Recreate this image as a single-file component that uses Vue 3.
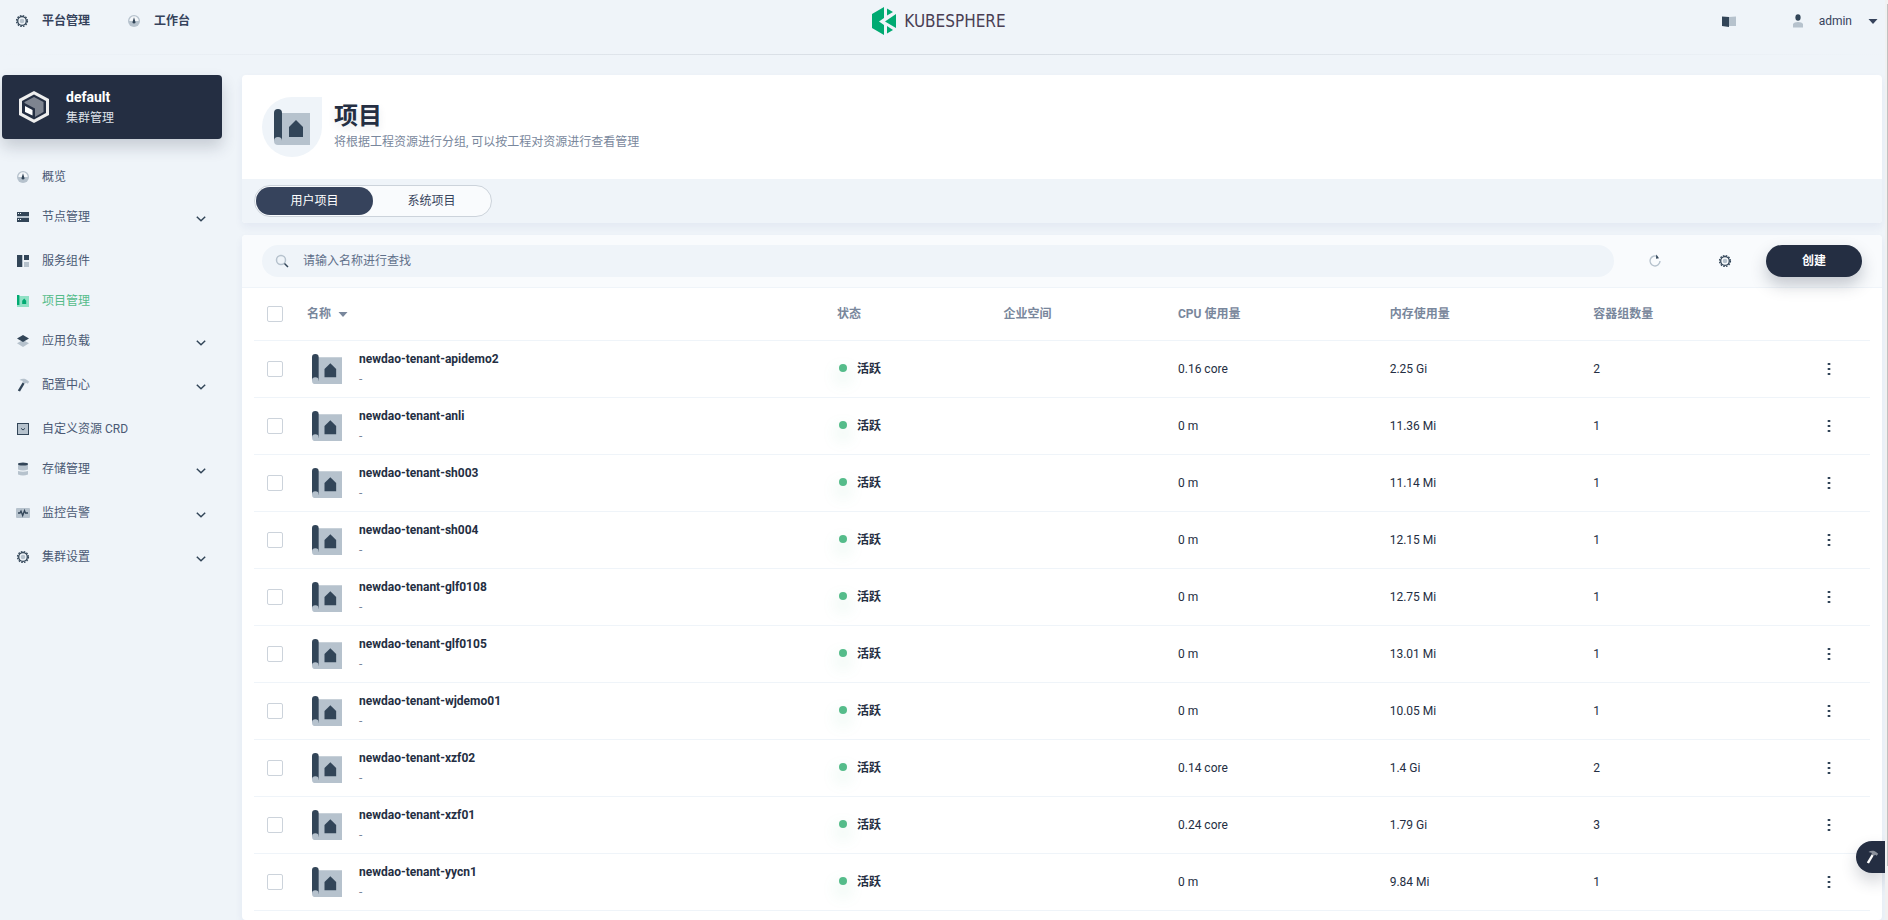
<script setup>
import { ref } from 'vue';

const keyword = ref('');
const activeTab = ref('user');
const selected = ref([]);

const tabs = [
  { key: 'user', label: '用户项目' },
  { key: 'system', label: '系统项目' },
];

const menus = [
  { icon: 'dashboard', label: '概览' },
  { icon: 'nodes', label: '节点管理', children: true },
  { icon: 'components', label: '服务组件' },
  { icon: 'project', label: '项目管理', active: true },
  { icon: 'workload', label: '应用负载', children: true },
  { icon: 'hammer', label: '配置中心', children: true },
  { icon: 'crd', label: '自定义资源 CRD' },
  { icon: 'storage', label: '存储管理', children: true },
  { icon: 'monitor', label: '监控告警', children: true },
  { icon: 'gear', label: '集群设置', children: true },
];

const projects = [
  { name: 'newdao-tenant-apidemo2', cpu: '0.16 core', memory: '2.25 Gi', pods: 2 },
  { name: 'newdao-tenant-anli', cpu: '0 m', memory: '11.36 Mi', pods: 1 },
  { name: 'newdao-tenant-sh003', cpu: '0 m', memory: '11.14 Mi', pods: 1 },
  { name: 'newdao-tenant-sh004', cpu: '0 m', memory: '12.15 Mi', pods: 1 },
  { name: 'newdao-tenant-glf0108', cpu: '0 m', memory: '12.75 Mi', pods: 1 },
  { name: 'newdao-tenant-glf0105', cpu: '0 m', memory: '13.01 Mi', pods: 1 },
  { name: 'newdao-tenant-wjdemo01', cpu: '0 m', memory: '10.05 Mi', pods: 1 },
  { name: 'newdao-tenant-xzf02', cpu: '0.14 core', memory: '1.4 Gi', pods: 2 },
  { name: 'newdao-tenant-xzf01', cpu: '0.24 core', memory: '1.79 Gi', pods: 3 },
  { name: 'newdao-tenant-yycn1', cpu: '0 m', memory: '9.84 Mi', pods: 1 },
];

function toggleAll(e) {
  selected.value = e.target.checked ? projects.map((p) => p.name) : [];
}
</script>

<template>
  <div class="page">
    <!-- 图标 -->
    <svg class="sprite" aria-hidden="true">
      <symbol id="gear" viewBox="0 0 14 14">
        <circle cx="7" cy="7" r="5.4" fill="none" stroke="#324558" stroke-width="1.4" stroke-dasharray="1.6 1.23" />
        <circle cx="7" cy="7" r="4.3" fill="none" stroke="#324558" stroke-width="1.3" />
        <circle cx="7" cy="7" r="2.3" fill="#b6c2cd" />
      </symbol>
      <symbol id="dashboard" viewBox="0 0 14 14">
        <circle cx="7" cy="7" r="6" fill="#b6c2cd" />
        <path d="M2.3 7a4.7 4.7 0 0 1 9.4 0z" fill="#f4f7fa" />
        <path d="M7 3.2l1.3 4.4a1.4 1.4 0 1 1-2.6 0z" fill="#324558" />
      </symbol>
      <symbol id="nodes" viewBox="0 0 14 14">
        <path d="M1 5h12v4H1z" fill="#b6c2cd" />
        <path d="M1 2h12v4H1zM1 8h12v4H1z" fill="#324558" />
        <path d="M2 3h1v1H2zM4 3h1v1H4zM2 9h1v1H2zM4 9h1v1H4z" fill="#eff4f9" />
      </symbol>
      <symbol id="components" viewBox="0 0 14 14">
        <path d="M1 1h5v12H1zM8 1h5v5H8z" fill="#324558" />
        <path d="M6 1h1v12H6zM8 8h5v5H8z" fill="#b6c2cd" />
      </symbol>
      <symbol id="project" viewBox="0 0 14 14">
        <path d="M3 2h10v11H1v-2h2z" fill="#90e0c5" />
        <path d="M1 1h2.4v10H1zM8.2 4.5l2 2.2V10h-4V6.700z" fill="#00aa72" />
      </symbol>
      <symbol id="workload" viewBox="0 0 14 14">
        <path d="M7 6l6 3.300-6 3.700-6-3.700z" fill="#b6c2cd" />
        <path d="M7 1l6 3.500-6 3.500-6-3.500z" fill="#324558" />
      </symbol>
      <symbol id="hammer" viewBox="0 0 14 14">
        <path d="M6.600 4.500l2.100 1L4 13.500l-2.200-1z" fill="#324558" />
        <path d="M3.500 2C6 .2 9 .3 11 2l2.200 1.800-1.500 2-1.600-1-1.200 1-2.700-1.300.8-1.600z" fill="#b6c2cd" />
      </symbol>
      <symbol id="hammer-light" viewBox="0 0 14 14">
        <path d="M6.600 4.500l2.100 1L4 13.500l-2.200-1z" fill="#ffffff" />
        <path d="M3.500 2C6 .2 9 .3 11 2l2.200 1.800-1.500 2-1.600-1-1.200 1-2.700-1.300.8-1.600z" fill="#8b919c" />
      </symbol>
      <symbol id="crd" viewBox="0 0 14 14">
        <rect x="1.500" y="1.500" width="11" height="11" fill="#b6c2cd" stroke="#324558" />
        <path d="M5 6.300l2 1.700 2-1.700" fill="none" stroke="#324558" />
      </symbol>
      <symbol id="storage" viewBox="0 0 14 14">
        <path d="M2 2h10v5.500q-5 2-10 0zM2 9q5 1.500 10 0v3.500q-5 2-10 0z" fill="#b6c2cd" />
        <ellipse cx="7" cy="2" rx="5" ry="1.500" fill="#324558" />
      </symbol>
      <symbol id="monitor" viewBox="0 0 14 14">
        <rect x="0" y="2" width="14" height="10" rx="1" fill="#b6c2cd" />
        <path d="M2 7h2l1-2 1.700 4.500L8.500 4.500 9.500 7H12" fill="none" stroke="#324558" stroke-width="1.300" />
      </symbol>
      <symbol id="chevron" viewBox="0 0 10 6">
        <path d="M.8.8L5 4.700 9.200.8" fill="none" stroke="#324558" stroke-width="1.500" />
      </symbol>
      <symbol id="caret" viewBox="0 0 10 5">
        <path d="M.5 0h9L5 5z" fill="currentColor" />
      </symbol>
      <symbol id="blueprint" viewBox="0 0 36 36">
        <path d="M6 4h30v32H4V30h2z" fill="#b6c2cd" />
        <path d="M0 4a4 4 0 0 1 8 0v28H0z" fill="#324558" />
        <path d="M4 28a4 4 0 0 1 4 4v4H4a4 4 0 0 1 0-8z" fill="#b6c2cd" />
        <path d="M22 11l7 7v10H15V18z" fill="#324558" />
      </symbol>
    </svg>

    <header class="topbar">
      <nav class="top-nav">
        <a href="#"><svg class="icon"><use href="#gear" /></svg>平台管理</a>
        <a href="#"><svg class="icon"><use href="#dashboard" /></svg>工作台</a>
      </nav>
      <a href="#" class="logo">
        <svg viewBox="0 0 24 28" width="24" height="28">
          <path d="M12 0v11L7 14.500 12 18v10L0 21V7z" fill="#00aa72" />
          <path d="M15 1.500l6 3.500-6 3.500zM24 7v14l-11-6.500zM15 19l6 4-6 3.500z" fill="#00aa72" />
        </svg>
        <span>KUBESPHERE</span>
      </a>
      <div class="account">
        <button type="button" class="doc" aria-label="文档">
          <svg viewBox="0 0 14 11" width="14" height="11">
            <path d="M7 1l7-.5v9.500H7z" fill="#b6c2cd" />
            <path d="M0 .5L7 1v10l-7-1z" fill="#324558" />
          </svg>
        </button>
        <button type="button" class="user">
          <svg viewBox="0 0 10 14" width="10" height="14">
            <path d="M0 13.500V10q1-2 5-2t5 2v3.500z" fill="#b6c2cd" />
            <ellipse cx="5" cy="3.500" rx="2.600" ry="3.300" fill="#324558" />
          </svg>
          <span>admin</span>
          <svg class="caret"><use href="#caret" /></svg>
        </button>
      </div>
    </header>

    <div class="body">
      <aside class="sidebar">
        <div class="cluster">
          <svg viewBox="0 0 32 34" width="32" height="34">
            <path d="M16 1l15 8v16l-15 8-15-8V9z" fill="#eeeeee" />
            <path d="M16 4.500l12 6.500v12l-12 6.500L4 23V11z" fill="#242e42" />
            <path d="M16 7l9.500 5v10L16 27.500 6.500 22V12z" fill="#7e8490" />
            <path d="M5.500 12.500L17 18.500V28.500L5.500 23z" fill="#242e42" />
            <path d="M7 16l7.500 4v5.500L7 22z" fill="#ffffff" />
          </svg>
          <div>
            <strong>default</strong>
            <p>集群管理</p>
          </div>
        </div>
        <ul class="menu">
          <li v-for="item in menus" :key="item.label">
            <a href="#" :class="{ active: item.active, parent: item.children }">
              <span class="label">
                <svg class="icon"><use :href="'#' + item.icon" /></svg>{{ item.label }}
              </span>
              <svg v-if="item.children" class="chevron"><use href="#chevron" /></svg>
            </a>
          </li>
        </ul>
      </aside>

      <main class="content">
        <section class="card banner">
          <div class="intro">
            <div class="badge"><svg width="36" height="36"><use href="#blueprint" /></svg></div>
            <div>
              <h1>项目</h1>
              <p>将根据工程资源进行分组, 可以按工程对资源进行查看管理</p>
            </div>
          </div>
          <div class="tabbar">
            <div class="tabs">
              <button
                v-for="tab in tabs"
                :key="tab.key"
                type="button"
                :class="{ on: activeTab === tab.key }"
                @click="activeTab = tab.key"
              >{{ tab.label }}</button>
            </div>
          </div>
        </section>

        <section class="card list">
          <div class="toolbar">
            <label class="search">
              <svg viewBox="0 0 14 14" width="14" height="14">
                <circle cx="6" cy="6" r="4.500" fill="none" stroke="#b6c2cd" stroke-width="1.500" />
                <path d="M9.500 9.500L13 13" stroke="#324558" stroke-width="1.500" />
              </svg>
              <input v-model="keyword" type="text" placeholder="请输入名称进行查找" aria-label="请输入名称进行查找" />
            </label>
            <button type="button" class="tool" aria-label="刷新">
              <svg viewBox="0 0 14 14" width="14" height="14">
                <path d="M9.500 2.600A5 5 0 1 0 12 7" fill="none" stroke="#b6c2cd" stroke-width="1.400" />
                <path d="M8.300.5l2.700 3.800L8 4.800z" fill="#324558" />
              </svg>
            </button>
            <button type="button" class="tool" aria-label="设置">
              <svg class="icon"><use href="#gear" /></svg>
            </button>
            <button type="button" class="create">创建</button>
          </div>

          <table>
            <colgroup>
              <col class="c-check" />
              <col class="c-name" />
              <col class="c-status" />
              <col class="c-space" />
              <col class="c-cpu" />
              <col class="c-memory" />
              <col />
              <col class="c-more" />
            </colgroup>
            <thead>
              <tr>
                <th class="check"><input type="checkbox" aria-label="全选" @change="toggleAll" /></th>
                <th><span class="sort">名称<svg class="caret"><use href="#caret" /></svg></span></th>
                <th>状态</th>
                <th>企业空间</th>
                <th>CPU 使用量</th>
                <th>内存使用量</th>
                <th>容器组数量</th>
                <th></th>
              </tr>
            </thead>
            <tbody>
              <tr v-for="item in projects" :key="item.name">
                <td class="check"><input v-model="selected" type="checkbox" :value="item.name" :aria-label="item.name" /></td>
                <td>
                  <div class="name">
                    <svg width="30" height="30"><use href="#blueprint" /></svg>
                    <div>
                      <a href="#">{{ item.name }}</a>
                      <p>-</p>
                    </div>
                  </div>
                </td>
                <td><span class="status"><i></i>活跃</span></td>
                <td></td>
                <td>{{ item.cpu }}</td>
                <td>{{ item.memory }}</td>
                <td>{{ item.pods }}</td>
                <td>
                  <button type="button" class="more" aria-label="更多">
                    <svg viewBox="0 0 4 12" width="4" height="12">
                      <path d="M1 0h2v2H1zM1 5h2v2H1zM1 10h2v2H1z" fill="#324558" />
                      <path d="M0 .5h4v1H0zM0 5.500h4v1H0zM0 10.500h4v1H0z" fill="#324558" opacity=".6" />
                    </svg>
                  </button>
                </td>
              </tr>
            </tbody>
          </table>
        </section>
      </main>
    </div>

    <button type="button" class="toolbox" aria-label="工具箱">
      <svg class="icon"><use href="#hammer-light" /></svg>
    </button>
    <div class="scroll"></div>
  </div>
</template>

<style>
body {
  margin: 0;
  background-color: #eff4f9;
}
</style>

<style scoped>
.page {
  position: relative;
  display: flex;
  flex-direction: column;
  height: 100vh;
  overflow: hidden;
  background-color: #eff4f9;
  color: #242e42;
  font-family: Roboto, "Noto Sans CJK SC", sans-serif;
  font-size: 12px;
  line-height: 20px;
}
.page * { box-sizing: border-box; }
.sprite {
  position: absolute;
  width: 0; height: 0;
}
svg { display: block; flex: none; }
a { color: inherit; text-decoration: none; }
p, h1, ul { margin: 0; padding: 0; }
button, input { font: inherit; color: inherit; }
button {
  padding: 0;
  border: 0;
  background: none;
  cursor: pointer;
}
.icon { width: 14px; height: 14px; }
.caret { width: 10px; height: 5px; }

/* 顶部 */
.topbar {
  display: grid;
  grid-template-columns: 1fr auto 1fr;
  align-items: start;
  height: 55px;
  padding: 7px 10px 0 0;
  border-bottom: 1px solid;
  border-image: linear-gradient(to right, #eff4f9, #d8dee5 45%, #d8dee5 55%, #eff4f9) 1;
}
.top-nav {
  display: flex;
  gap: 37px;
  height: 28px;
  padding-left: 15px;
  color: #36435c;
  font-weight: 700;
}
.top-nav a {
  display: flex;
  align-items: center;
  gap: 13px;
}
.logo {
  display: flex;
  align-items: center;
  gap: 8px;
  height: 28px;
  color: #4a3f54;
  font-family: "Liberation Sans Narrow", "DejaVu Sans Condensed", Lato, sans-serif;
  font-size: 17px;
}
.account {
  display: flex;
  justify-content: flex-end;
  gap: 57px;
  height: 28px;
  color: #36435c;
}
.user {
  display: flex;
  align-items: center;
  gap: 16px;
}

.body {
  display: flex;
  flex: 1;
  gap: 20px;
  min-height: 0;
  padding: 20px 6px 0 2px;
}

/* 侧边栏 */
.sidebar { width: 220px; flex: none; }
.cluster {
  display: flex;
  align-items: center;
  gap: 16px;
  height: 64px;
  padding: 0 16px;
  border-radius: 4px;
  background-color: #242e42;
  color: #dfe3ea;
  box-shadow: 0 8px 16px rgba(36, 46, 66, 0.2);
}
.cluster strong {
  color: #ffffff;
  font-size: 14px;
}
.menu {
  padding: 18px 16px 0 14px;
  list-style: none;
  color: #4a5974;
}
.menu a {
  display: flex;
  justify-content: space-between;
  height: 40px;
}
.menu .parent { height: 44px; }
.menu .active { color: #55bc8a; }
.label {
  display: flex;
  align-items: center;
  gap: 12px;
  height: 40px;
}
.chevron {
  align-self: center;
  width: 10px; height: 6px;
}

/* 内容 */
.content {
  display: flex;
  flex: 1;
  flex-direction: column;
  gap: 12px;
  min-width: 0;
}
.card {
  border-radius: 4px;
  background-color: #ffffff;
  box-shadow: 0 4px 8px rgba(36, 46, 140, 0.06);
}
.intro {
  display: flex;
  align-items: center;
  gap: 12px;
  height: 104px;
  padding: 0 20px;
}
.badge {
  display: flex;
  align-items: center;
  justify-content: center;
  width: 60px; height: 60px;
  border-radius: 50% 0 50% 50%;
  background-color: #eff4f9;
}
.intro h1 {
  font-size: 24px;
  line-height: 32px;
  text-shadow: 0 4px 8px rgba(36, 46, 66, 0.1);
}
.intro p {
  padding-bottom: 2px;
  color: #79879c;
}
.tabbar {
  padding: 6px 12px;
  border-radius: 0 0 4px 4px;
  background-color: #eff4f9;
}
.tabs {
  display: inline-flex;
  padding: 1px;
  border: 1px solid #ccd3db;
  border-radius: 16px;
  background-color: #f9fbfd;
  vertical-align: top;
}
.tabs button {
  width: 117px; height: 28px;
  border-radius: 14px;
  color: #36435c;
}
.tabs .on {
  background-color: #36435c;
  color: #ffffff;
}

.list { flex: 1; }
.toolbar {
  display: flex;
  padding: 10px 20px;
  border-bottom: 1px solid #eff4f9;
  border-radius: 4px 4px 0 0;
  background-color: #f9fbfd;
}
.search {
  display: flex;
  flex: 1;
  align-items: center;
  gap: 14px;
  height: 32px;
  margin-right: 6px;
  padding: 0 13px;
  border-radius: 16px;
  background-color: #eff4f9;
}
.search input {
  flex: 1;
  padding: 0;
  border: 0;
  outline: 0;
  background: none;
}
.search input::placeholder { color: #5f708a; opacity: 1; }
.tool {
  display: flex;
  align-items: center;
  justify-content: center;
  width: 70px;
}
.create {
  width: 96px; height: 32px;
  margin-left: 6px;
  border-radius: 16px;
  background-color: #242e42;
  color: #ffffff;
  font-weight: 700;
  box-shadow: 0 8px 16px rgba(36, 46, 66, 0.25);
}

/* 表格 */
table {
  width: calc(100% - 24px);
  margin: 0 12px;
  border-spacing: 0;
  table-layout: fixed;
}
.c-check { width: 53px; }
.c-name { width: 32.8%; }
.c-status { width: 10.3%; }
.c-space { width: 10.8%; }
.c-cpu { width: 13.1%; }
.c-memory { width: 12.6%; }
.c-more { width: 49px; }
th, td {
  padding: 0;
  border-bottom: 1px solid #eff4f9;
  text-align: left;
}
th {
  height: 53px;
  color: #79879c;
}
td { height: 57px; }
.check { padding-left: 13px; }
.check input {
  display: block;
  width: 16px; height: 16px;
  margin: 0;
  border: 1px solid #ccd3db;
  border-radius: 2px;
  background-color: #ffffff;
  appearance: none;
}
.check input:checked { background-color: #55bc8a; }
.sort {
  display: flex;
  align-items: center;
  gap: 7px;
}
.name {
  display: flex;
  align-items: center;
  gap: 17px;
  padding-left: 5px;
}
.name a { font-weight: 700; }
.name p { color: #79879c; }
.status {
  display: flex;
  align-items: center;
  gap: 10px;
  padding-left: 2px;
  font-weight: 700;
}
.status i {
  width: 8px; height: 8px;
  margin-bottom: 2px;
  border-radius: 50%;
  background-color: #55bc8a;
  box-shadow: 0 8px 16px rgba(85, 188, 138, 0.4);
}
.more {
  display: flex;
  justify-content: center;
  width: 16px;
}

.toolbox {
  position: absolute;
  right: 3px; bottom: 47px;
  width: 29px; height: 32px;
  padding-left: 9px;
  border-radius: 16px 0 0 16px;
  background-color: #242e42;
  box-shadow: 0 8px 16px rgba(36, 46, 66, 0.2);
}
.scroll {
  position: absolute;
  top: 0; right: 0; bottom: 0;
  width: 3px;
  background: linear-gradient(#c1c1c1, #c1c1c1) right 4px / 1px 862px no-repeat #f1f1f1;
}
</style>
